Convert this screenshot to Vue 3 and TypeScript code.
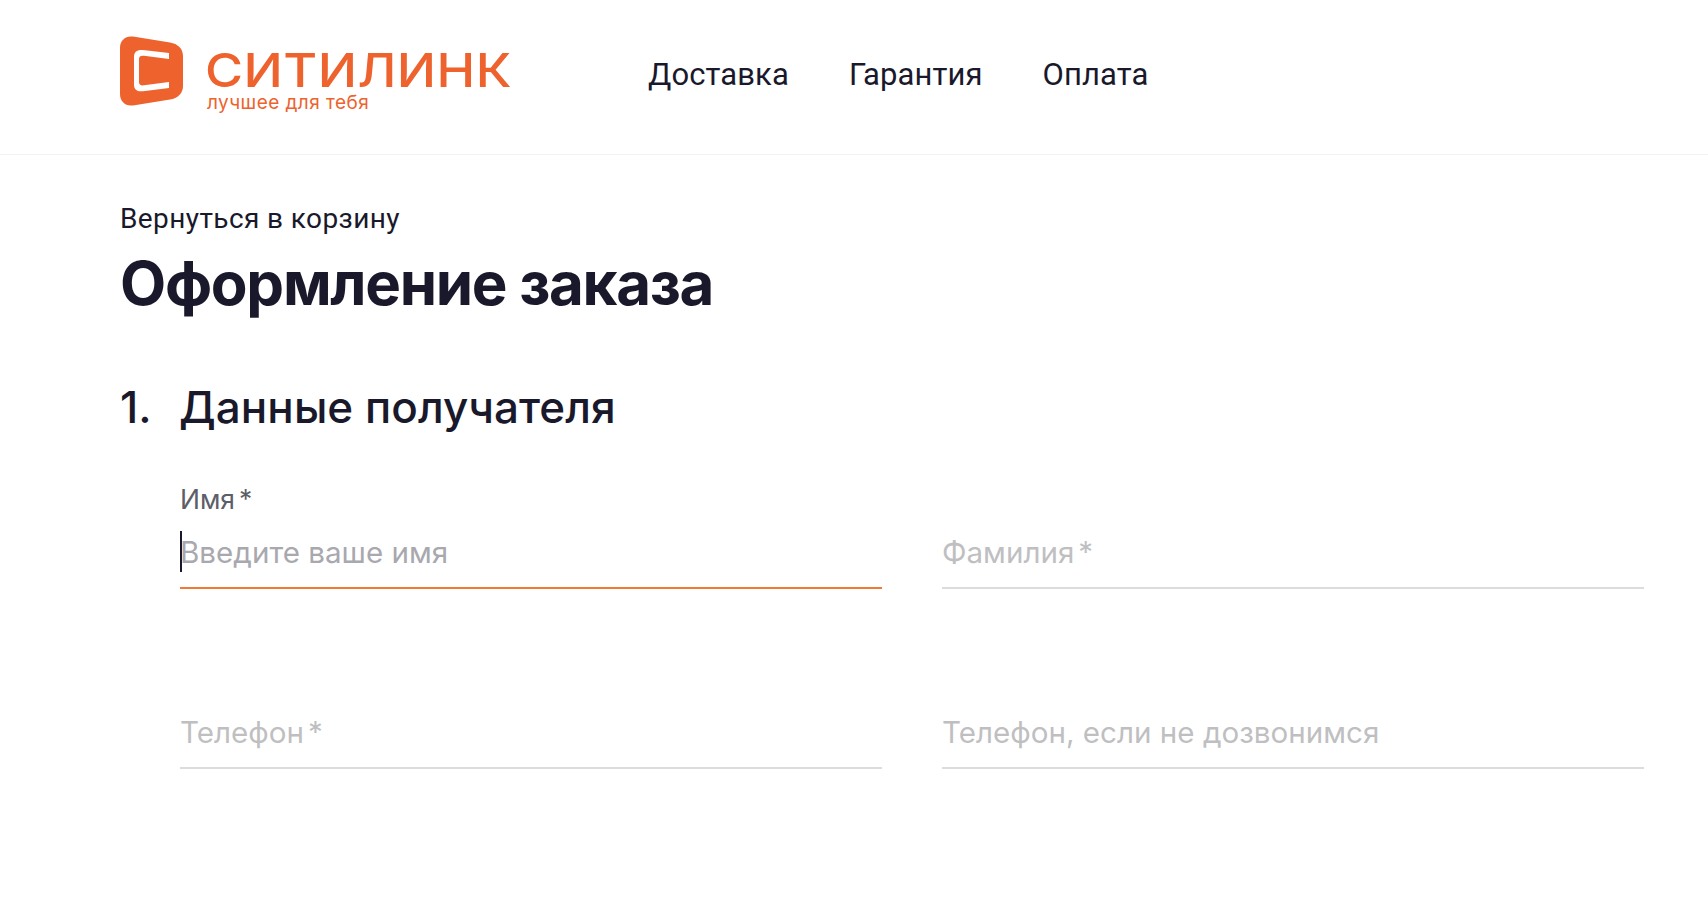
<script setup lang="ts">
interface Field {
  label: string
  required: boolean
  focused?: boolean
  placeholder?: string
}

const nav: string[] = ['Доставка', 'Гарантия', 'Оплата']
const fields: Field[] = [
  { label: 'Имя', required: true, focused: true, placeholder: 'Введите ваше имя' },
  { label: 'Фамилия', required: true },
  { label: 'Телефон', required: true },
  { label: 'Телефон, если не дозвонимся', required: false }
]
</script>

<template>
  <div class="page">
    <header class="header">
      <a class="brand">
        <svg class="mark" viewBox="0 0 63 70" width="63" height="70" aria-hidden="true">
          <path d="M13 .6 50 6.4C57.8 7.6 63 12.6 63 20V50C63 57.4 57.8 62.4 50 63.6L13 69.4C5.6 70.5 0 65.6 0 58V12C0 4.4 5.6-.5 13 .6Z" fill="#ee622d" />
          <path d="M49 17 23 14C17 13.4 14 16 14 21V48.5C14 53.5 17 56 23 55.2L49 52V46L24 49.3C20.5 49.7 19 48.5 19 46V23C19 20.6 20.5 19.4 24 19.8L49 23Z" fill="#fff" />
        </svg>
        <span class="brand-text">
          <span class="brand-name">СИТИЛИНК</span>
          <span class="brand-tag">лучшее для тебя</span>
        </span>
      </a>
      <nav class="nav">
        <a v-for="item in nav" :key="item" class="nav-link">{{ item }}</a>
      </nav>
    </header>

    <main class="main">
      <a class="back">Вернуться в корзину</a>
      <h1 class="title">Оформление заказа</h1>

      <section class="section">
        <h2 class="section-title"><span class="section-num">1.</span>Данные получателя</h2>
        <div class="form">
          <div v-for="f in fields" :key="f.label" class="field" :class="{ focused: f.focused }">
            <div class="label-row">
              <span v-if="f.focused" class="label">{{ f.label }}<span class="star">*</span></span>
            </div>
            <div class="control">
              <template v-if="f.focused">
                <i class="caret"></i>
                <span class="placeholder strong">{{ f.placeholder }}</span>
              </template>
              <span v-else class="placeholder">{{ f.label }}<span v-if="f.required" class="star">*</span></span>
            </div>
          </div>
        </div>
      </section>
    </main>
  </div>
</template>

<style>
html, body { margin: 0; background: #fff; }
</style>

<style scoped>
.page {
  min-height: 910px;
  font-family: Inter, "Noto Sans", sans-serif;
  color: #19192b;
}
.header {
  height: 154px;
  box-sizing: content-box;
  border-bottom: 1px solid #f2f2f2;
  padding: 0 120px;
  display: flex;
  align-items: flex-start;
}
.brand {
  display: flex;
  gap: 24px;
  width: 528px;
  padding-top: 36px;
}
.mark { display: block; flex: none; }
.brand-text { display: flex; flex-direction: column; }
.brand-name {
  font-size: 46px;
  line-height: 40px;
  margin: 14px 0 0 -2px;
  font-weight: 500;
  letter-spacing: 0.4px;
  color: #ee622d;
  transform: scaleX(1.13);
  transform-origin: left center;
  white-space: nowrap;
}
.brand-tag {
  font-size: 19px;
  line-height: 20px;
  margin-top: 3px;
  letter-spacing: 0.45px;
  color: #ee622d;
}
.nav {
  display: flex;
  gap: 60px;
  padding-top: 55px;
}
.nav-link {
  font-family: Roboto, sans-serif;
  font-size: 31px;
  line-height: 40px;
  letter-spacing: 0.1px;
}
.main { padding: 0 64px 0 120px; }
.back {
  display: block;
  margin-top: 47px;
  font-family: Roboto, sans-serif;
  font-size: 28px;
  line-height: 34px;
  letter-spacing: 0.4px;
}
.title {
  margin: 11px 0 0;
  font-size: 60px;
  line-height: 72px;
  font-weight: 700;
  letter-spacing: -1.3px;
}
.section { margin-top: 61px; }
.section-title {
  margin: 0;
  display: flex;
  font-size: 44px;
  line-height: 54px;
  font-weight: 500;
  letter-spacing: 0.05px;
}
.section-num { width: 59px; }
.form {
  margin-top: 47px;
  padding-left: 60px;
  display: grid;
  grid-template-columns: 702px 702px;
  column-gap: 60px;
  row-gap: 72px;
}
.field { display: flex; flex-direction: column; }
.label-row { height: 36px; }
.label {
  font-size: 26.5px;
  line-height: 36px;
  color: #5e5e68;
}
.control {
  position: relative;
  height: 70px;
  box-sizing: content-box;
  display: flex;
  align-items: center;
  border-bottom: 2px solid #dcdcdc;
}
.focused .control { border-bottom-color: #ee7a35; }
.caret {
  position: absolute;
  left: 0;
  top: 14px;
  width: 2px;
  height: 41px;
  background: #19192b;
}
.placeholder {
  font-size: 29.6px;
  line-height: 40px;
  margin-top: 0;
  color: #bfbfc2;
}
.placeholder.strong { color: #a8a8ae; }
.star {
  font-size: 1em;
  line-height: 0;
  margin-left: 4px;
}
</style>
